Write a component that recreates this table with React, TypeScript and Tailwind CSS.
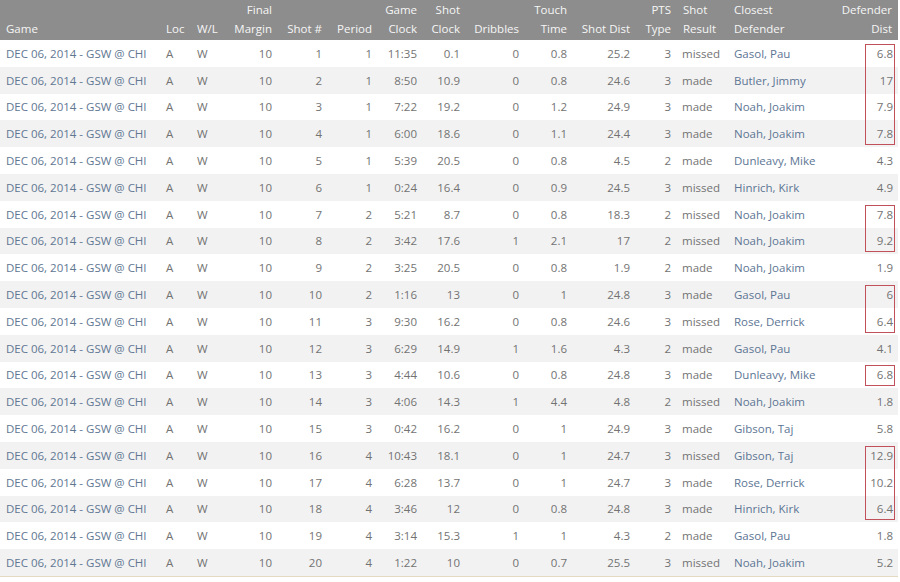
const cols =
  "grid grid-cols-[160px_31px_36px_51px_50px_50px_45px_43px_59px_48px_63px_41px_51px_112px_58px]";

type Shot = [number, number, string, string, number, string, string, number, string, string, string];

const shots: Shot[] = [
  [1, 1, "11:35", "0.1", 0, "0.8", "25.2", 3, "missed", "Gasol, Pau", "6.8"],
  [2, 1, "8:50", "10.9", 0, "0.8", "24.6", 3, "made", "Butler, Jimmy", "17"],
  [3, 1, "7:22", "19.2", 0, "1.2", "24.9", 3, "made", "Noah, Joakim", "7.9"],
  [4, 1, "6:00", "18.6", 0, "1.1", "24.4", 3, "made", "Noah, Joakim", "7.8"],
  [5, 1, "5:39", "20.5", 0, "0.8", "4.5", 2, "made", "Dunleavy, Mike", "4.3"],
  [6, 1, "0:24", "16.4", 0, "0.9", "24.5", 3, "missed", "Hinrich, Kirk", "4.9"],
  [7, 2, "5:21", "8.7", 0, "0.8", "18.3", 2, "missed", "Noah, Joakim", "7.8"],
  [8, 2, "3:42", "17.6", 1, "2.1", "17", 2, "missed", "Noah, Joakim", "9.2"],
  [9, 2, "3:25", "20.5", 0, "0.8", "1.9", 2, "made", "Noah, Joakim", "1.9"],
  [10, 2, "1:16", "13", 0, "1", "24.8", 3, "made", "Gasol, Pau", "6"],
  [11, 3, "9:30", "16.2", 0, "0.8", "24.6", 3, "missed", "Rose, Derrick", "6.4"],
  [12, 3, "6:29", "14.9", 1, "1.6", "4.3", 2, "made", "Gasol, Pau", "4.1"],
  [13, 3, "4:44", "10.6", 0, "0.8", "24.8", 3, "made", "Dunleavy, Mike", "6.8"],
  [14, 3, "4:06", "14.3", 1, "4.4", "4.8", 2, "missed", "Noah, Joakim", "1.8"],
  [15, 3, "0:42", "16.2", 0, "1", "24.9", 3, "made", "Gibson, Taj", "5.8"],
  [16, 4, "10:43", "18.1", 0, "1", "24.7", 3, "missed", "Gibson, Taj", "12.9"],
  [17, 4, "6:28", "13.7", 0, "1", "24.7", 3, "made", "Rose, Derrick", "10.2"],
  [18, 4, "3:46", "12", 0, "0.8", "24.8", 3, "made", "Hinrich, Kirk", "6.4"],
  [19, 4, "3:14", "15.3", 1, "1", "4.3", 2, "made", "Gasol, Pau", "1.8"],
  [20, 4, "1:22", "10", 0, "0.7", "25.5", 3, "missed", "Noah, Joakim", "5.2"],
];

// highlighted defender distance groups: first row index -> number of rows
const boxes: Record<number, number> = { 0: 4, 6: 2, 9: 2, 12: 1, 15: 3 };

const ROW = 26.8;

function Head({ top, bottom, right }: { top?: string; bottom: string; right?: boolean }) {
  return (
    <div
      className={`flex flex-col justify-end pb-[8px] leading-[19px] ${
        right ? "items-end pr-[6px]" : "items-start pl-[6px]"
      }`}
    >
      {top && <span>{top}</span>}
      <span>{bottom}</span>
    </div>
  );
}

export default function App() {
  return (
    <div className="w-[900px] h-[582px] bg-white font-['Open_Sans',sans-serif] text-[11.5px]">
      <div className="w-[898px] border-b border-[#e4dac2]">
        <div className={`${cols} h-[40px] overflow-hidden bg-[#8d8d8d] text-[#f6f6f6]`}>
          <Head bottom="Game" />
          <Head bottom="Loc" />
          <Head bottom="W/L" />
          <Head top="Final" bottom="Margin" right />
          <Head bottom="Shot #" right />
          <Head bottom="Period" right />
          <Head top="Game" bottom="Clock" right />
          <Head top="Shot" bottom="Clock" right />
          <Head bottom="Dribbles" right />
          <Head top="Touch" bottom="Time" right />
          <Head bottom="Shot Dist" right />
          <Head top="PTS" bottom="Type" right />
          <Head top="Shot" bottom="Result" />
          <Head top="Closest" bottom="Defender" />
          <Head top="Defender" bottom="Dist" right />
        </div>

        {shots.map((s, i) => (
          <div
            key={i}
            className={`${cols} h-[26.8px] items-center text-[#737373] ${
              i % 2 === 1 ? "bg-[#f2f2f2]" : "bg-white"
            }`}
          >
            <span className="pl-[6px] text-[#617792] whitespace-nowrap">DEC 06, 2014 - GSW @ CHI</span>
            <span className="pl-[6px]">A</span>
            <span className="pl-[6px]">W</span>
            <span className="pr-[6px] text-right">10</span>
            <span className="pr-[6px] text-right">{s[0]}</span>
            <span className="pr-[6px] text-right">{s[1]}</span>
            <span className="pr-[6px] text-right">{s[2]}</span>
            <span className="pr-[6px] text-right">{s[3]}</span>
            <span className="pr-[6px] text-right">{s[4]}</span>
            <span className="pr-[6px] text-right">{s[5]}</span>
            <span className="pr-[6px] text-right">{s[6]}</span>
            <span className="pr-[6px] text-right">{s[7]}</span>
            <span className="pl-[5px]">{s[8]}</span>
            <span className="pl-[6px] text-[#5d7594] whitespace-nowrap">{s[9]}</span>
            <span className="relative pr-[5px] text-right">
              {s[10]}
              {boxes[i] && (
                <span
                  className="pointer-events-none absolute right-[3px] left-[25px] top-[-1px] border border-[#c0505a]"
                  style={{ height: boxes[i] * ROW - 6 }}
                />
              )}
            </span>
          </div>
        ))}
      </div>
    </div>
  );
}
